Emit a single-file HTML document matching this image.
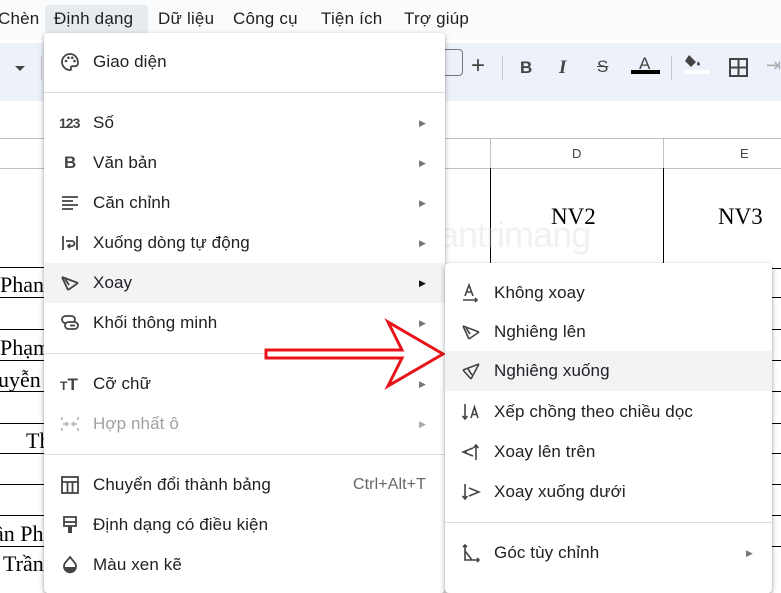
<!DOCTYPE html>
<html><head><meta charset="utf-8">
<style>
*{margin:0;padding:0;box-sizing:border-box}
body{width:781px;height:574px;overflow:hidden;position:relative;background:#fff;font-family:"Liberation Sans",Arial,sans-serif;color:#202124}
.abs{position:absolute}
.mb{font-size:17px;top:9px;color:#1f1f1f;letter-spacing:.2px}
.menu{position:absolute;background:#fff;box-shadow:0 2px 6px rgba(0,0,0,.3),0 1px 2px rgba(0,0,0,.15);border-radius:4px}
.it{position:absolute;left:0;right:0;height:40px;font-size:17px;line-height:40px;letter-spacing:.1px}
.it .t{position:absolute;left:49px}
.it .ic{position:absolute;left:16px;top:10px;width:20px;height:20px}
.it .ar{position:absolute;right:19px;top:0;font-size:9px;color:#777}
.sep{position:absolute;left:0;right:0;height:1px;background:#dadce0}
.hl{background:#f1f3f4}
.tm{font-family:"Liberation Serif",serif;font-size:23px;color:#000}
.hline{position:absolute;height:1px;background:#000}
</style></head><body>
<div class="abs" style="left:0;top:0;width:781px;height:40px;background:#f9fbfd"></div>
<div class="abs" style="left:45px;top:5px;width:103px;height:30px;background:#e8ebee;border-radius:4px"></div>
<div class="abs mb" style="left:-2px">Chèn</div>
<div class="abs mb" style="left:54px">Định dạng</div>
<div class="abs mb" style="left:158px">Dữ liệu</div>
<div class="abs mb" style="left:233px">Công cụ</div>
<div class="abs mb" style="left:321px">Tiện ích</div>
<div class="abs mb" style="left:404px">Trợ giúp</div>
<div class="abs" style="left:0;top:43px;width:781px;height:58px;background:#edf2fa"></div>
<div class="abs" style="left:15px;top:66px;width:0;height:0;border-left:5px solid transparent;border-right:5px solid transparent;border-top:5px solid #444"></div>
<div class="abs" style="left:41px;top:56px;width:1px;height:24px;background:#c7c7c7"></div>
<div class="abs" style="left:430px;top:49px;width:33px;height:27px;border:1px solid #747775;border-radius:4px"></div>
<div class="abs" style="left:471px;top:52px;font-size:24px;color:#444">+</div>
<div class="abs" style="left:502px;top:56px;width:1px;height:24px;background:#c7c7c7"></div>
<div class="abs" style="left:520px;top:58px;font-size:17px;font-weight:bold;color:#444">B</div>
<div class="abs" style="left:559px;top:57px;font-size:19px;font-style:italic;font-weight:bold;color:#444;font-family:'Liberation Serif',serif">I</div>
<div class="abs" style="left:597px;top:57px;font-size:17px;color:#444;text-decoration:line-through">S</div>
<div class="abs" style="left:639px;top:54px;font-size:17px;color:#444">A</div>
<div class="abs" style="left:631px;top:70px;width:29px;height:4px;background:#000"></div>
<div class="abs" style="left:671px;top:56px;width:1px;height:24px;background:#c7c7c7"></div>
<svg class="abs" style="left:684px;top:52px" width="26" height="22" viewBox="0 0 26 22"><path d="M5 3l7 7-5 5-6-6zM14 9l2 3a1.5 1.5 0 1 1-3 0z" fill="#444"/><rect x="0" y="18" width="26" height="4" fill="#fff"/></svg>
<svg class="abs" style="left:729px;top:58px" width="19" height="19"><rect x="1" y="1" width="17" height="17" fill="none" stroke="#444" stroke-width="2"/><path d="M9.5 1v17M1 9.5h17" stroke="#444" stroke-width="2"/></svg>
<div class="abs" style="left:766px;top:55px;font-size:18px;color:#aaa">⇥</div>
<div class="abs" style="left:0;top:138px;width:781px;height:1px;background:#c0c0c0"></div>
<div class="abs" style="left:0;top:168px;width:781px;height:1px;background:#c0c0c0"></div>
<div class="abs" style="left:490px;top:138px;width:1px;height:30px;background:#c0c0c0"></div>
<div class="abs" style="left:663px;top:138px;width:1px;height:30px;background:#c0c0c0"></div>
<div class="abs" style="left:572px;top:146px;font-size:13px;color:#444">D</div>
<div class="abs" style="left:740px;top:146px;font-size:13px;color:#444">E</div>
<div class="abs" style="left:490px;top:168px;width:1px;height:100px;background:#000"></div>
<div class="abs" style="left:663px;top:168px;width:1px;height:100px;background:#000"></div>
<div class="abs tm" style="left:551px;top:204px">NV2</div>
<div class="abs tm" style="left:718px;top:204px">NV3</div>
<div class="abs" style="left:420px;top:214px;font-size:36px;color:rgba(215,215,215,.35);letter-spacing:-1px">uantrimang</div>
<div class="hline" style="left:0;top:267px;width:44px"></div>
<div class="hline" style="left:0;top:297px;width:44px"></div>
<div class="hline" style="left:0;top:329px;width:44px"></div>
<div class="hline" style="left:0;top:360px;width:44px"></div>
<div class="hline" style="left:0;top:391px;width:44px"></div>
<div class="hline" style="left:0;top:423px;width:44px"></div>
<div class="hline" style="left:0;top:453px;width:44px"></div>
<div class="hline" style="left:0;top:484px;width:44px"></div>
<div class="hline" style="left:0;top:515px;width:44px"></div>
<div class="hline" style="left:0;top:546px;width:44px"></div>
<div class="abs tm" style="left:0;top:272px;font-size:22px">Phan</div>
<div class="abs tm" style="left:0;top:335px;font-size:22px">Phạm</div>
<div class="abs tm" style="left:-2px;top:367px;font-size:22px">uyễn</div>
<div class="abs tm" style="left:26px;top:428px;font-size:22px">Th</div>
<div class="abs tm" style="left:-6px;top:521px;font-size:22px">ần Ph</div>
<div class="abs tm" style="left:3px;top:551px;font-size:22px">Trần</div>
<div class="hline" style="left:771px;top:268px;width:10px"></div>
<div class="hline" style="left:771px;top:297px;width:10px"></div>
<div class="hline" style="left:771px;top:329px;width:10px"></div>
<div class="hline" style="left:771px;top:360px;width:10px"></div>
<div class="hline" style="left:771px;top:391px;width:10px"></div>
<div class="hline" style="left:771px;top:423px;width:10px"></div>
<div class="hline" style="left:771px;top:453px;width:10px"></div>
<div class="hline" style="left:771px;top:484px;width:10px"></div>
<div class="hline" style="left:771px;top:515px;width:10px"></div>
<div class="hline" style="left:771px;top:546px;width:10px"></div>
<div class="menu" style="left:44px;top:33px;width:401px;height:560px">
 <div class="it" style="top:9px"><svg class="ic" viewBox="0 0 20 20"><path d="M10 2a8 8 0 0 0 0 16c1.2 0 1.5-.8 1-1.6-.6-1 0-2.2 1.3-2.2H15a3 3 0 0 0 3-3C18 5.5 14.5 2 10 2z" fill="none" stroke="#444" stroke-width="1.8"/><circle cx="6" cy="9" r="1.3" fill="#444"/><circle cx="8.5" cy="5.8" r="1.3" fill="#444"/><circle cx="12.3" cy="5.8" r="1.3" fill="#444"/><circle cx="14.5" cy="9" r="1.3" fill="#444"/></svg><span class="t">Giao diện</span></div>
 <div class="sep" style="top:59px"></div>
 <div class="it" style="top:70px"><span class="abs" style="left:15px;top:0;font-size:14px;font-weight:bold;color:#444;letter-spacing:-1px">123</span><span class="t">Số</span><span class="ar">▶</span></div>
 <div class="it" style="top:110px"><span class="abs" style="left:20px;top:0;font-size:17px;font-weight:bold;color:#444">B</span><span class="t">Văn bản</span><span class="ar">▶</span></div>
 <div class="it" style="top:150px"><svg class="ic" viewBox="0 0 20 20"><path d="M2 4h16M2 8h11M2 12h16M2 16h11" stroke="#444" stroke-width="1.8"/></svg><span class="t">Căn chỉnh</span><span class="ar">▶</span></div>
 <div class="it" style="top:190px"><svg class="ic" viewBox="0 0 20 20"><path d="M3 3v14M17 3v14M6 8h6a2.5 2.5 0 0 1 0 5H8M10 11l-2 2 2 2" fill="none" stroke="#444" stroke-width="1.8"/></svg><span class="t">Xuống dòng tự động</span><span class="ar">▶</span></div>
 <div class="it hl" style="top:230px"><svg class="ic" viewBox="0 0 20 20"><path d="M2 4l16 6M2 4l6 13M8 17l10-7M5 6l4 6" fill="none" stroke="#444" stroke-width="1.8"/></svg><span class="t">Xoay</span><span class="ar" style="color:#111">▶</span></div>
 <div class="it" style="top:270px"><svg class="ic" viewBox="0 0 20 20"><rect x="2" y="3" width="13" height="7" rx="3.5" fill="none" stroke="#444" stroke-width="1.8"/><rect x="5" y="9" width="13" height="7" rx="3.5" fill="#fff" stroke="#444" stroke-width="1.8"/><path d="M10 12.5h5" stroke="#444" stroke-width="1.8"/></svg><span class="t">Khối thông minh</span><span class="ar">▶</span></div>
 <div class="sep" style="top:320px"></div>
 <div class="it" style="top:331px"><span class="abs" style="left:16px;top:1px;font-size:17px;font-weight:bold;color:#444"><span style="font-size:12px">T</span>T</span><span class="t">Cỡ chữ</span><span class="ar">▶</span></div>
 <div class="it" style="top:371px;color:#999"><svg class="ic" viewBox="0 0 20 20"><path d="M2 3v3M2 14v3M18 3v3M18 14v3M3 10h5M6 8l2 2-2 2M17 10h-5M14 8l-2 2 2 2" fill="none" stroke="#bbb" stroke-width="1.8"/></svg><span class="t" style="color:#a0a0a0">Hợp nhất ô</span><span class="ar" style="color:#aaa">▶</span></div>
 <div class="sep" style="top:421px"></div>
 <div class="it" style="top:432px"><svg class="ic" viewBox="0 0 20 20"><rect x="2" y="2" width="16" height="16" fill="none" stroke="#444" stroke-width="1.8"/><path d="M2 7h16M7.5 7v11M12.5 7v11" stroke="#444" stroke-width="1.8"/></svg><span class="t">Chuyển đổi thành bảng</span><span class="abs" style="right:19px;color:#666;font-size:16px">Ctrl+Alt+T</span></div>
 <div class="it" style="top:472px"><svg class="ic" viewBox="0 0 20 20"><path d="M4 2h12v9H4z" fill="none" stroke="#444" stroke-width="1.8"/><path d="M4 7h12" stroke="#444" stroke-width="1.8"/><path d="M8 11h4v7H8z" fill="#444"/></svg><span class="t">Định dạng có điều kiện</span></div>
 <div class="it" style="top:512px"><svg class="ic" viewBox="0 0 20 20"><path d="M10 2l5 6a6 6 0 1 1-10 0z" fill="none" stroke="#444" stroke-width="1.8"/><path d="M4.5 12h11a5.5 5.5 0 0 1-11 0z" fill="#444"/></svg><span class="t">Màu xen kẽ</span></div>
</div>
<svg class="abs" style="left:0;top:0" width="781" height="574"><polygon points="266,350 402,350 388,322 443,354 388,386 402,358 266,358" fill="#fff" stroke="#e8141a" stroke-width="3" stroke-linejoin="miter"/></svg>
<div class="menu" style="left:445px;top:263px;width:327px;height:330px">
 <div class="it" style="top:10px"><svg class="ic" viewBox="0 0 20 20"><path d="M4 13l4-11 4 11M5.5 9h5M2 17h14M14 15l2 2-2 2" fill="none" stroke="#444" stroke-width="1.6"/></svg><span class="t">Không xoay</span></div>
 <div class="it" style="top:49px"><svg class="ic" viewBox="0 0 20 20"><path d="M2 4l16 6M2 4l6 13M8 17l10-7M5 6l4 6" fill="none" stroke="#444" stroke-width="1.6"/></svg><span class="t">Nghiêng lên</span></div>
 <div class="it hl" style="top:88px"><svg class="ic" viewBox="0 0 20 20"><path d="M2 9l16-6M18 3l-8 15M2 9l8 9M7 8l4 6" fill="none" stroke="#444" stroke-width="1.6"/></svg><span class="t">Nghiêng xuống</span></div>
 <div class="it" style="top:129px"><svg class="ic" viewBox="0 0 20 20"><path d="M4 2v15M1.5 14l2.5 3 2.5-3M10 16l3.5-11 3.5 11M11 12.5h5" fill="none" stroke="#444" stroke-width="1.6"/></svg><span class="t">Xếp chồng theo chiều dọc</span></div>
 <div class="it" style="top:169px"><svg class="ic" viewBox="0 0 20 20"><path d="M12 6L2 10l10 4M5 9v2M15 18V3M12.5 6l2.5-3 2.5 3" fill="none" stroke="#444" stroke-width="1.6"/></svg><span class="t">Xoay lên trên</span></div>
 <div class="it" style="top:209px"><svg class="ic" viewBox="0 0 20 20"><path d="M8 6l10 4-10 4M4 2v15M1.5 14l2.5 3 2.5-3" fill="none" stroke="#444" stroke-width="1.6"/></svg><span class="t">Xoay xuống dưới</span></div>
 <div class="sep" style="top:259px"></div>
 <div class="it" style="top:270px"><svg class="ic" viewBox="0 0 20 20"><path d="M4 2v15h14M2 4l2-2 2 2M16 15l2 2-2 2M4 8l7 9" fill="none" stroke="#444" stroke-width="1.6"/></svg><span class="t">Góc tùy chỉnh</span><span class="ar">▶</span></div>
</div>
</body></html>
